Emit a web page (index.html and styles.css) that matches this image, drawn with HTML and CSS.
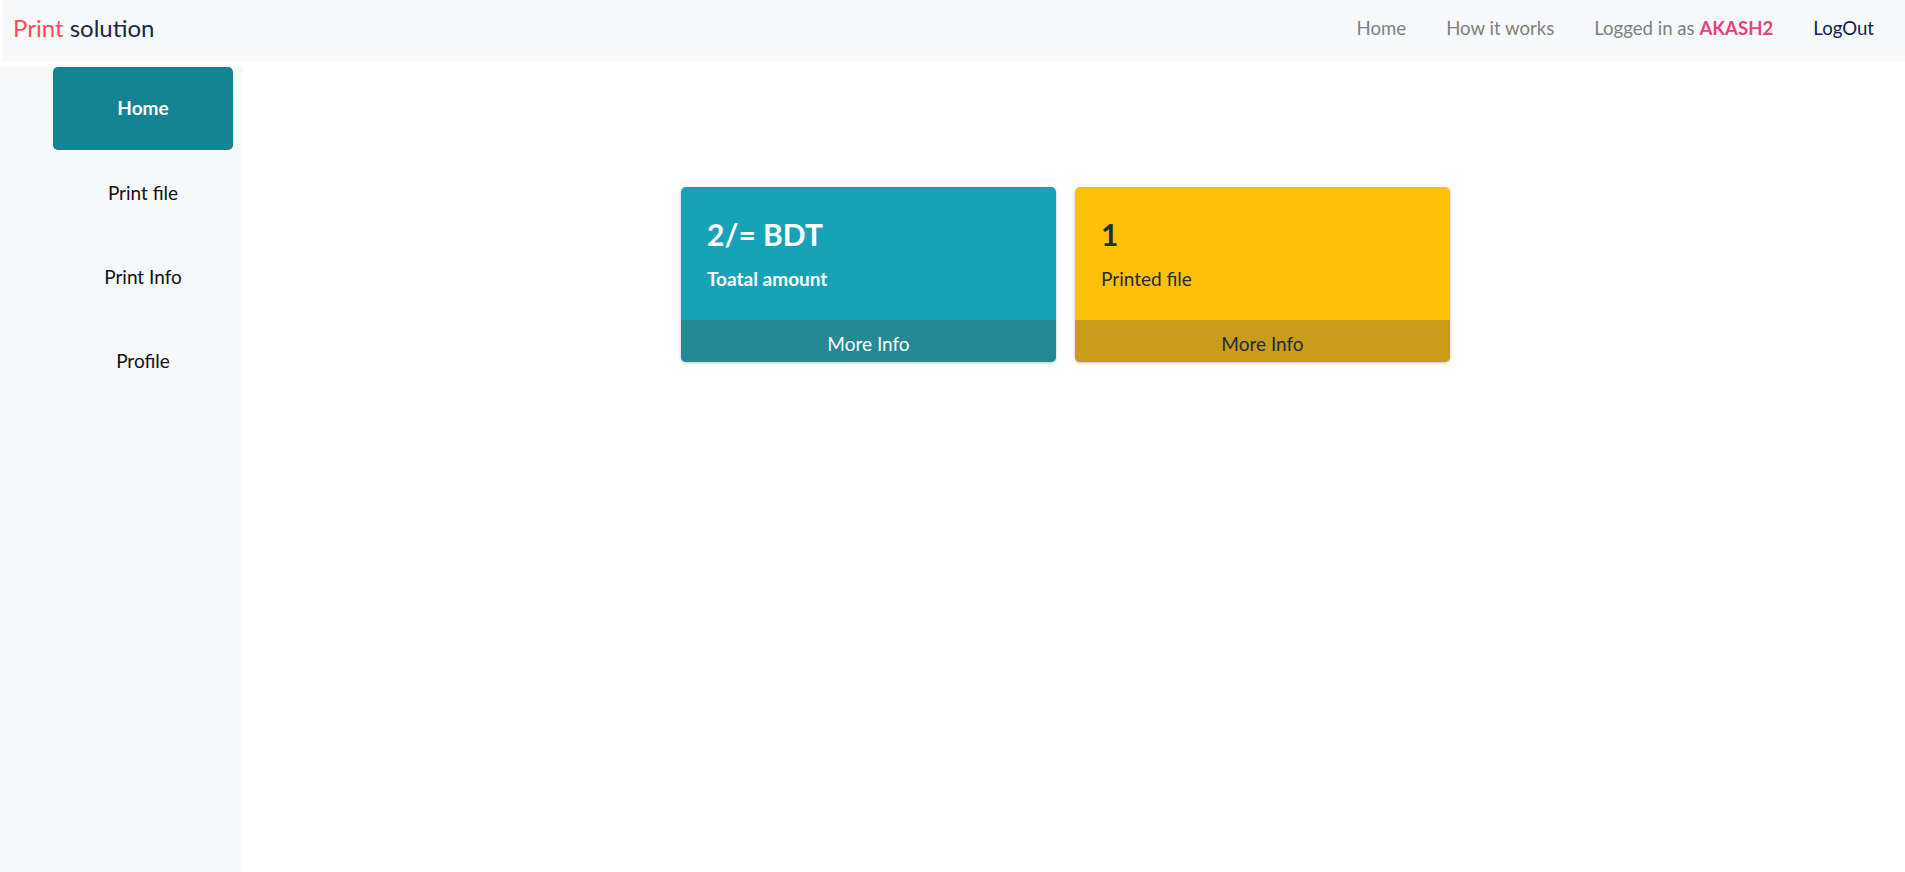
FILE: index.html
```html
<!DOCTYPE html>
<html lang="en">
<head>
<meta charset="utf-8">
<title>Print solution</title>
<link rel="stylesheet" href="styles.css">
</head>
<body>
<nav class="topbar">
  <a class="brand" href="#"><span class="brand-red">Print</span> solution</a>
  <ul class="nav-links">
    <li><a class="nav-link" href="#">Home</a></li>
    <li><a class="nav-link" href="#">How it works</a></li>
    <li><span class="nav-link">Logged in as <b class="user">AKASH2</b></span></li>
    <li><a class="nav-link dark" href="#">LogOut</a></li>
  </ul>
</nav>
<div class="layout">
  <aside class="sidebar">
    <a class="side-item active" href="#">Home</a>
    <a class="side-item" href="#">Print file</a>
    <a class="side-item" href="#">Print Info</a>
    <a class="side-item" href="#">Profile</a>
  </aside>
  <main class="main">
    <div class="cards">
      <div class="card card-info">
        <div class="card-body">
          <h3 class="card-title">2/= BDT</h3>
          <p class="card-text strong">Toatal amount</p>
        </div>
        <a class="card-footer" href="#">More Info</a>
      </div>
      <div class="card card-warning">
        <div class="card-body">
          <h3 class="card-title">1</h3>
          <p class="card-text">Printed file</p>
        </div>
        <a class="card-footer" href="#">More Info</a>
      </div>
    </div>
  </main>
</div>
</body>
</html>
```

FILE: styles.css
```css
* { box-sizing: border-box; }
html, body { margin: 0; padding: 0; }
body {
  font-family: "Lato", "Noto Sans", sans-serif;
  font-size: 19px;
  color: #212529;
  background: #fff;
  height: 872px;
  overflow: hidden;
}
a { text-decoration: none; color: inherit; }

.topbar {
  margin-left: 2px;
  height: 61px;
  background: #f8f9fa;
  display: flex;
  align-items: center;
  justify-content: space-between;
  padding: 0 11px 0 11px;
}
.brand {
  font-size: 24px;
  color: #1b2845;
  padding-bottom: 6px;
}
.brand-red { color: #ff4d55; }
.nav-links {
  list-style: none;
  margin: 0;
  padding: 0 0 6px 0;
  display: flex;
}
.nav-link {
  display: block;
  padding: 8px 20px;
  color: #808080;
  font-size: 18.6px;
}
.nav-link.dark { color: #0c2450; }
.user { color: #ea3f80; font-weight: 700; }

.layout {
  display: flex;
  margin-top: 5px;
  height: 806px;
}
.sidebar {
  width: 243px;
  background: #f8f9fa;
  padding: 1px 10px 0 53px;
  display: flex;
  flex-direction: column;
}
.side-item {
  height: 84px;
  display: flex;
  align-items: center;
  justify-content: center;
  color: #111;
  font-size: 19px;
  border-radius: 5px;
}
.side-item.active {
  height: 83px;
  padding-bottom: 2px;
  background: #148494;
  color: #fff;
  font-weight: 700;
}

.main {
  flex: 1;
  padding: 121px 0 0 438px;
}
.cards {
  display: flex;
  gap: 19px;
}
.card {
  width: 375px;
  height: 175px;
  border-radius: 5px;
  overflow: hidden;
  display: flex;
  flex-direction: column;
  box-shadow: 0 1px 3px rgba(0,0,0,.25);
}
.card-body {
  flex: 1;
  padding: 29px 26px 0 26px;
}
.card-title {
  margin: 0;
  font-size: 30px;
  font-weight: 700;
  line-height: 1.2;
}
.card-text {
  margin: 15px 0 0 0;
  font-size: 19px;
}
.card-text.strong { font-weight: 700; }
.card-footer {
  height: 42px;
  padding-top: 4px;
  display: flex;
  align-items: center;
  justify-content: center;
  font-size: 19px;
}
.card-info { background: #17a2b8; color: #fff; }
.card-info .card-footer { background: #248994; color: #fff; }
.card-warning { background: #ffc107; color: #1f2d3d; }
.card-warning .card-footer { background: #c99c19; color: #1f2d3d; }
```
